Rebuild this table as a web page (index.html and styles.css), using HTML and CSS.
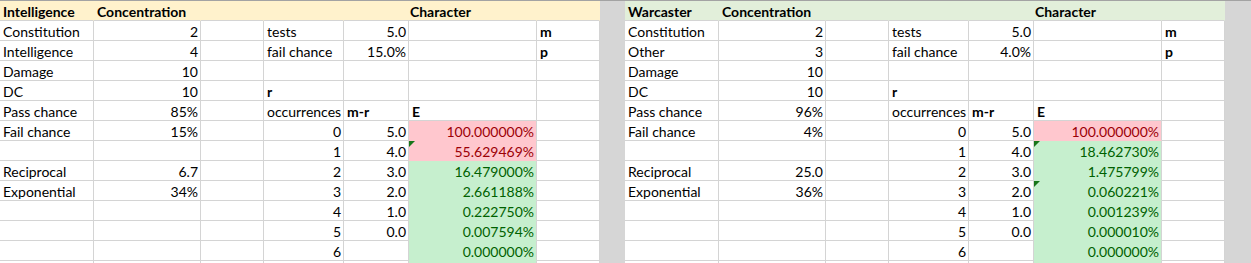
FILE: index.html
```html
<!DOCTYPE html>
<html lang="en">
  <head>
    <meta charset="UTF-8" />
    <meta name="viewport" content="width=device-width, initial-scale=1.0" />
    <title>Concentration Checks</title>
    <link rel="stylesheet" href="styles.css">
  </head>
  <body>
    <div class="workbook">
      <div class="sheet" id="intSheet"></div>
      <div class="sheet" id="warSheet"></div>
    </div>
    <script>
      const boldWords = new Set(["m", "p", "r", "m-r", "E"]);

      const sheets = [
        {
          id: "intSheet",
          tint: "yellow",
          title: "Intelligence",
          flags: [6],
          rows: [
            ["Constitution", "2", "", "tests", "5.0", "", "m"],
            ["Intelligence", "4", "", "fail chance", "15.0%", "", "p"],
            ["Damage", "10", "", "", "", "", ""],
            ["DC", "10", "", "r", "", "", ""],
            ["Pass chance", "85%", "", "occurrences", "m-r", "E", ""],
            ["Fail chance", "15%", "", "0", "5.0", "100.000000%", ""],
            ["", "", "", "1", "4.0", "55.629469%", ""],
            ["Reciprocal", "6.7", "", "2", "3.0", "16.479000%", ""],
            ["Exponential", "34%", "", "3", "2.0", "2.661188%", ""],
            ["", "", "", "4", "1.0", "0.222750%", ""],
            ["", "", "", "5", "0.0", "0.007594%", ""],
            ["", "", "", "6", "", "0.000000%", ""],
            ["", "", "", "", "", "", ""],
          ],
        },
        {
          id: "warSheet",
          tint: "green",
          title: "Warcaster",
          flags: [6, 8],
          rows: [
            ["Constitution", "2", "", "tests", "5.0", "", "m"],
            ["Other", "3", "", "fail chance", "4.0%", "", "p"],
            ["Damage", "10", "", "", "", "", ""],
            ["DC", "10", "", "r", "", "", ""],
            ["Pass chance", "96%", "", "occurrences", "m-r", "E", ""],
            ["Fail chance", "4%", "", "0", "5.0", "100.000000%", ""],
            ["", "", "", "1", "4.0", "18.462730%", ""],
            ["Reciprocal", "25.0", "", "2", "3.0", "1.475799%", ""],
            ["Exponential", "36%", "", "3", "2.0", "0.060221%", ""],
            ["", "", "", "4", "1.0", "0.001239%", ""],
            ["", "", "", "5", "0.0", "0.000010%", ""],
            ["", "", "", "6", "", "0.000000%", ""],
            ["", "", "", "", "", "", ""],
          ],
        },
      ];

      // Classes for one cell: alignment, weight and the E column colouring
      function cellClass(text, row, col, sheet) {
        const cls = ["cell"];
        if (/^-?[\d.]+%?$/.test(text)) cls.push("num");
        if (boldWords.has(text)) cls.push("b");
        if (col === 5 && row >= 5) {
          const value = parseFloat(text) || 0;
          cls.push(value >= 50 ? "bad" : "good");
          if (sheet.flags.includes(row)) cls.push("flag");
        }
        return cls.join(" ");
      }

      function renderSheet(sheet) {
        const head = `cell head ${sheet.tint}`;
        let html = `
          <div class="${head} b">${sheet.title}</div>
          <div class="${head} b">Concentration</div>
          <div class="${head}"></div>
          <div class="${head}"></div>
          <div class="${head} b merged">Character</div>
          <div class="${head}"></div>
        `;
        sheet.rows.forEach((row, r) => {
          row.forEach((text, c) => {
            html += `<div class="${cellClass(text, r, c, sheet)}">${text}</div>`;
          });
        });
        document.getElementById(sheet.id).innerHTML = html;
      }

      sheets.forEach(renderSheet);
    </script>
  </body>
</html>
```

FILE: styles.css
```css
body {
  margin: 0;
  background-color: #d6d6d6;
  font-family: Lato, "Liberation Sans", sans-serif;
  font-size: 14px;
  color: #000;
}
.workbook {
  display: flex;
  gap: 25px;
  border-top: 1px solid #a3a3a3;
  height: 262px;
  overflow: hidden;
}
.sheet {
  display: grid;
  grid-template-columns: 94px 107px 63px 80px 65px 128px 63px;
  grid-auto-rows: 20px;
  align-content: start;
  background: #ffffff;
}
.cell {
  box-sizing: border-box;
  position: relative;
  padding: 2px 2px 0 3px;
  line-height: 17px;
  white-space: nowrap;
  border-right: 1px solid #d4d4d4;
  border-bottom: 1px solid #d4d4d4;
}
.num {
  text-align: right;
}
.b {
  font-weight: bold;
}
.head.yellow {
  background: #fff2cc;
  border-right-color: #fff2cc;
}
.head.green {
  background: #e2efda;
  border-right-color: #e2efda;
}
.merged {
  grid-column: span 2;
  text-align: center;
}
.bad {
  background: #ffc7ce;
  color: #9c0006;
  border-bottom-color: #ffc7ce;
}
.good {
  background: #c6efce;
  color: #006100;
  border-bottom-color: #c6efce;
}
.flag::before {
  content: "";
  position: absolute;
  top: 0;
  left: 0;
  border-top: 6px solid #17761a;
  border-right: 6px solid transparent;
}
```
